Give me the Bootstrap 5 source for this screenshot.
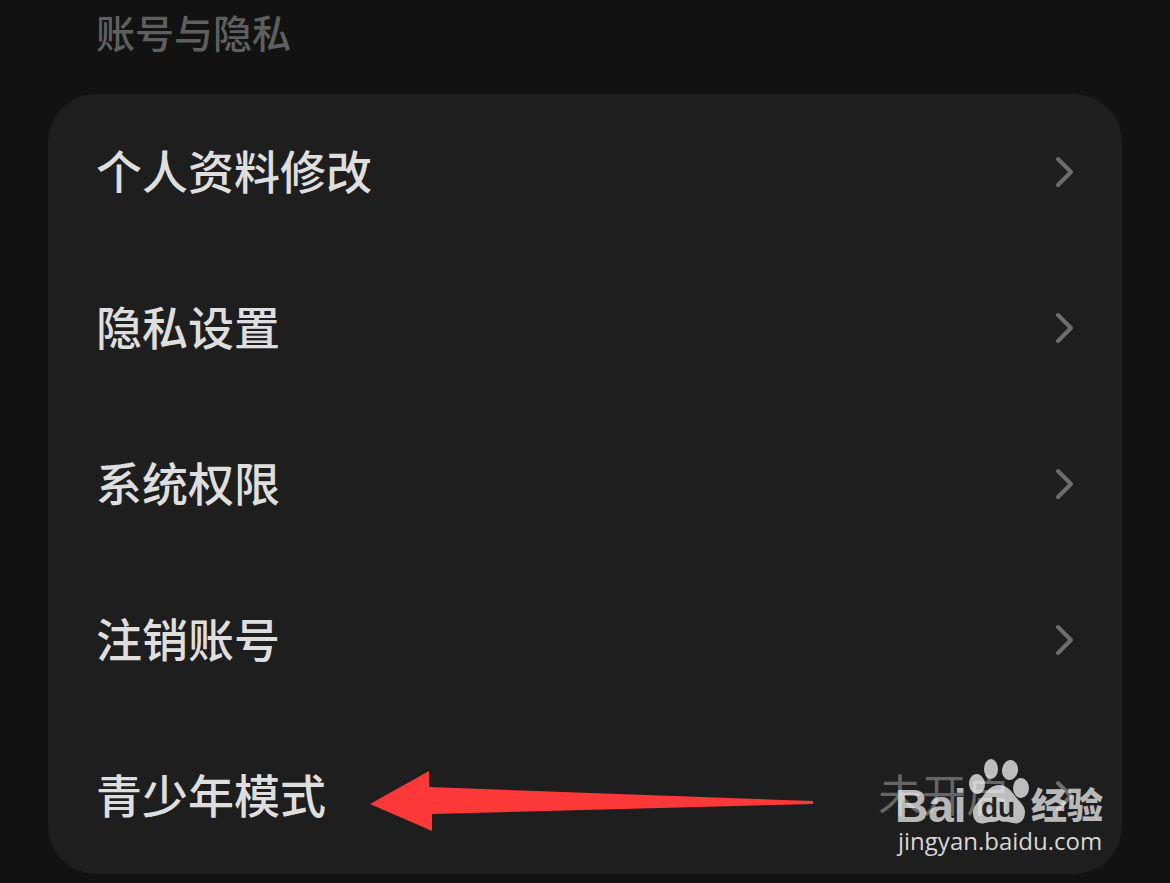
<!DOCTYPE html>
<html lang="zh-CN">
<head>
<meta charset="utf-8">
<meta name="viewport" content="width=device-width, initial-scale=1">
<title>账号与隐私</title>
<link href="https://cdn.jsdelivr.net/npm/bootstrap@5.3.0/dist/css/bootstrap.min.css" rel="stylesheet">
<style>
  body { background: #121212; color: #dedede; font-family: "Noto Sans CJK SC", sans-serif; }
  .section-title { font-size: 39px; line-height: 48px; font-weight: 500; color: #5f5f5f; padding: 7px 48px 39px; margin: 0; }
  .settings { background: #1e1e1e; border-radius: 48px; }
  .setting-row { height: 156px; padding: 0 48px; font-size: 46px; line-height: 60px; font-weight: 500; color: inherit; }
  .setting-row:hover { color: #fff; }
  .setting-row span { padding-bottom: 6px; }
  .setting-value { font-size: 44px; font-weight: 400; color: #666; margin-right: 44px; }
  .chevron { width: 20px; height: 32px; fill: none; stroke: #6e6e6e; stroke-width: 4; stroke-linecap: round; stroke-linejoin: round; }
  .pointer { left: 322px; top: 52px; width: 444px; height: 64px; fill: #fd3838; }
  .watermark { right: 12px; bottom: 12px; width: 216px; height: 106px; }
</style>
</head>
<body>
<main class="px-5">
  <h1 class="section-title">账号与隐私</h1>
  <nav class="settings position-relative" aria-label="账号与隐私">
    <a href="#profile" class="setting-row d-flex align-items-center text-decoration-none">
      <span>个人资料修改</span>
      <svg class="chevron ms-auto" viewBox="0 0 20 32" aria-hidden="true"><path d="M4 3 17 16 4 29"/></svg>
    </a>
    <a href="#privacy" class="setting-row d-flex align-items-center text-decoration-none">
      <span>隐私设置</span>
      <svg class="chevron ms-auto" viewBox="0 0 20 32" aria-hidden="true"><path d="M4 3 17 16 4 29"/></svg>
    </a>
    <a href="#permissions" class="setting-row d-flex align-items-center text-decoration-none">
      <span>系统权限</span>
      <svg class="chevron ms-auto" viewBox="0 0 20 32" aria-hidden="true"><path d="M4 3 17 16 4 29"/></svg>
    </a>
    <a href="#close-account" class="setting-row d-flex align-items-center text-decoration-none">
      <span>注销账号</span>
      <svg class="chevron ms-auto" viewBox="0 0 20 32" aria-hidden="true"><path d="M4 3 17 16 4 29"/></svg>
    </a>
    <a href="#teen-mode" class="setting-row d-flex align-items-center text-decoration-none position-relative">
      <span>青少年模式</span>
      <span class="setting-value ms-auto">未开启</span>
      <svg class="chevron" viewBox="0 0 20 32" aria-hidden="true"><path d="M4 3 17 16 4 29"/></svg>
      <svg class="pointer position-absolute" viewBox="0 0 444 64" aria-hidden="true"><path d="M0 34 59 1V17L443 31V34L62 44V61Z"/></svg>
    </a>
    <svg class="watermark position-absolute pe-none" viewBox="0 0 216 106" role="img" aria-label="Baidu 经验 jingyan.baidu.com">
      <g fill="#fff" fill-opacity=".71">
        <text x="1" y="66" font-family="Liberation Sans, sans-serif" font-weight="700" font-size="46">Bai</text>
        <ellipse cx="83" cy="28" rx="8" ry="10" transform="rotate(-6 83 28)"/>
        <ellipse cx="97" cy="13" rx="7" ry="10"/>
        <ellipse cx="116" cy="14" rx="8" ry="10" transform="rotate(8 116 14)"/>
        <ellipse cx="127" cy="32" rx="8" ry="10"/>
        <path d="M105 29C98 29 93 34 89 40C84 46 79 50 79 57C79 65 85 69 91 67C98 65 101 67 105 64C109 67 112 65 119 67C126 69 131 64 131 56C131 50 126 46 121 40C116 33 112 29 105 29Z"/>
        <text x="137" y="63" font-family="Noto Sans CJK SC, sans-serif" font-weight="900" font-size="36">经验</text>
      </g>
      <text x="87" y="61" font-family="Liberation Sans, sans-serif" font-weight="700" font-size="28" fill="#222">du</text>
      <text x="4" y="94" font-family="Open Sans, sans-serif" font-weight="500" font-size="24" fill="#d6d6d6">jingyan.baidu.com</text>
    </svg>
  </nav>
</main>
<script src="https://cdn.jsdelivr.net/npm/bootstrap@5.3.0/dist/js/bootstrap.bundle.min.js"></script>
</body>
</html>
